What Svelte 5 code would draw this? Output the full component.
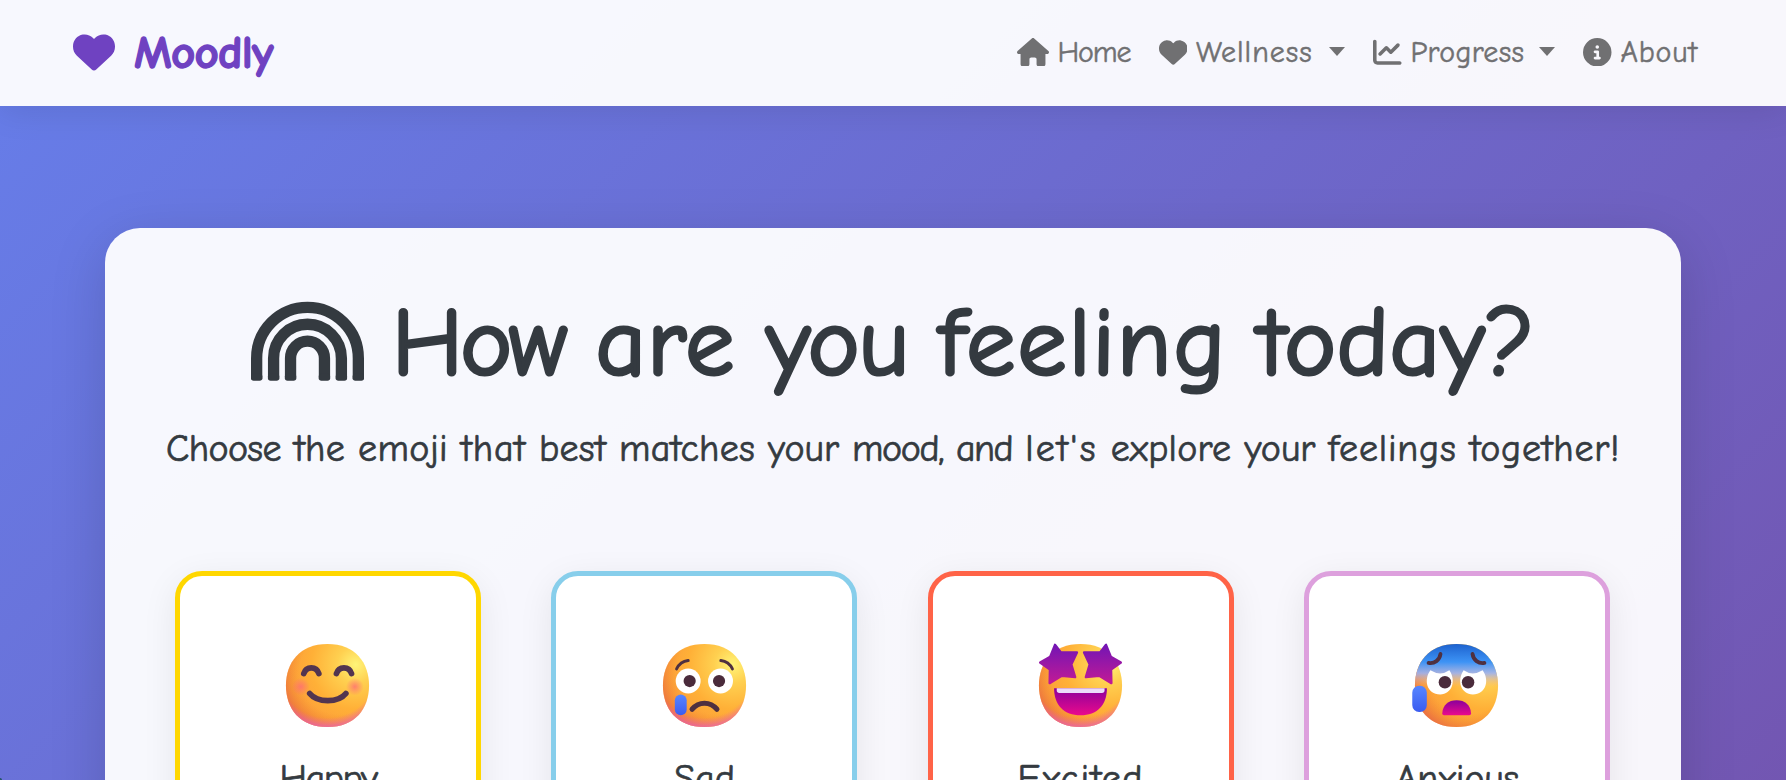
<script>
  const heart = 'M47.6 300.4L228.3 469.1c7.5 7 17.4 10.9 27.7 10.9s20.2-3.9 27.7-10.9L464.4 300.4c30.4-28.3 47.6-68 47.6-109.5v-5.8c0-69.9-50.5-129.5-119.4-141C347 36.5 300.6 51.4 268 84L256 96 244 84c-32.6-32.6-79-47.5-124.6-39.9C50.5 55.6 0 115.2 0 185.1v5.8c0 41.5 17.2 81.2 47.6 109.5z';
  const house = 'M575.8 255.5c0 18-15 32.1-32 32.1h-32l.7 160.2c0 2.7-.2 5.4-.5 8.1V472c0 22.1-17.9 40-40 40H456c-1.1 0-2.2 0-3.3-.1c-1.4 .1-2.8 .1-4.2 .1H416 392c-22.1 0-40-17.9-40-40V448 384c0-17.7-14.3-32-32-32H256c-17.7 0-32 14.3-32 32v64 24c0 22.1-17.9 40-40 40H160 128.1c-1.5 0-3-.1-4.5-.2c-1.2 .1-2.4 .2-3.6 .2H104c-22.1 0-40-17.9-40-40V360c0-.9 0-1.9 .1-2.8V287.6H32c-18 0-32-14-32-32.1c0-9 3-17 10-24L266.4 8c7-7 15-8 22-8s15 2 21 7L564.8 231.5c8 7 12 15 11 24z';
  const chart = 'M64 64c0-17.7-14.3-32-32-32S0 46.3 0 64V400c0 44.2 35.8 80 80 80H480c17.7 0 32-14.3 32-32s-14.3-32-32-32H80c-8.8 0-16-7.2-16-16V64zm406.6 86.6c12.5-12.5 12.5-32.8 0-45.3s-32.8-12.5-45.3 0L320 210.7l-57.4-57.4c-12.5-12.5-32.8-12.5-45.3 0l-112 112c-12.5 12.5-12.5 32.8 0 45.3s32.8 12.5 45.3 0L240 221.3l57.4 57.4c12.5 12.5 32.8 12.5 45.3 0l128-128z';
  const info = 'M256 512A256 256 0 1 0 256 0a256 256 0 1 0 0 512zM216 336h24V272H216c-13.3 0-24-10.7-24-24s10.7-24 24-24h48c13.3 0 24 10.7 24 24v88h8c13.3 0 24 10.7 24 24s-10.7 24-24 24H216c-13.3 0-24-10.7-24-24s10.7-24 24-24zm40-208a32 32 0 1 1 0 64 32 32 0 1 1 0-64z';
  const face = 'M16 30C25.33 30 30 23.73 30 16C30 8.27 25.33 2 16 2C6.66 2 2 8.27 2 16C2 23.73 6.66 30 16 30Z';
  const star = 'M7.4 2.3L9.4 4.9L14.8 4.9L12.9 8.9L14.2 13.2L9.7 12.7L5.6 15.2L5.7 10.6L2.4 8.3L5.8 6.3Z';

  const links = [
    { label: 'Home', icon: house, box: 576, iconWidth: 32, width: 73, spacing: -1.1 },
    { label: 'Wellness', icon: heart, box: 512, iconWidth: 28.5, width: 116, spacing: 1, menu: true },
    { label: 'Progress', icon: chart, box: 512, iconWidth: 28.5, width: 111.5, spacing: 0.3, menu: true },
    { label: 'About', icon: info, box: 512, iconWidth: 28.5, width: 79.5, spacing: 0.8 },
  ];
  const title = [
    { word: 'How', spacing: -2.6 },
    { word: 'are', spacing: 1.1 },
    { word: 'you', spacing: -0.9 },
    { word: 'feeling', spacing: 2.2 },
    { word: 'today?', spacing: 0.7 },
  ];
  const subtitle = [
    { word: 'Choose', spacing: -0.55 },
    { word: 'the', spacing: 0.25 },
    { word: 'emoji', spacing: 0.45 },
    { word: 'that', spacing: 0.8 },
    { word: 'best', spacing: 0.25 },
    { word: 'matches', spacing: 0.25 },
    { word: 'your', spacing: 0 },
    { word: 'mood,', spacing: -1.4 },
    { word: 'and', spacing: -1.5 },
    { word: "let's", spacing: 2.2 },
    { word: 'explore', spacing: 0.25 },
    { word: 'your', spacing: 0 },
    { word: 'feelings', spacing: 0.8 },
    { word: 'together!', spacing: 0.75 },
  ];
  const moods = [
    { label: 'Happy', color: '#ffd700', spacing: -1.4 },
    { label: 'Sad', color: '#87ceeb', spacing: 0.2 },
    { label: 'Excited', color: '#ff6347', spacing: 1.5 },
    { label: 'Anxious', color: '#dda0dd', spacing: -0.2 },
  ];
</script>

{#snippet words(list)}
  {#each list as t, i}<span style="letter-spacing:{t.spacing}px">{t.word}</span>{i < list.length - 1 ? ' ' : ''}{/each}
{/snippet}

<svg class="defs" aria-hidden="true">
  <defs>
    <radialGradient id="base" cx="25.5" cy="9" r="25" gradientUnits="userSpaceOnUse">
      <stop offset="0" stop-color="#fff478" /><stop offset=".25" stop-color="#ffd050" /><stop offset=".6" stop-color="#ffb037" /><stop offset="1" stop-color="#fb9a3c" />
    </radialGradient>
    <radialGradient id="warm" cx="20" cy="12" r="21" gradientUnits="userSpaceOnUse">
      <stop offset=".65" stop-color="#f08423" stop-opacity="0" /><stop offset="1" stop-color="#e0554b" stop-opacity=".75" />
    </radialGradient>
    <radialGradient id="pink" cx="16" cy="10" r="21" gradientUnits="userSpaceOnUse">
      <stop offset=".8" stop-color="#f15db1" stop-opacity="0" /><stop offset="1" stop-color="#e45fd0" stop-opacity=".85" />
    </radialGradient>
    <radialGradient id="cheek">
      <stop offset="0" stop-color="#ff6d75" stop-opacity=".8" /><stop offset="1" stop-color="#ff6d75" stop-opacity="0" />
    </radialGradient>
    <linearGradient id="starfill" x1="0" y1="0" x2="0" y2="1">
      <stop offset="0" stop-color="#7315b4" /><stop offset="1" stop-color="#c11a96" />
    </linearGradient>
    <linearGradient id="mouth" x1="0" y1="0" x2="0" y2="1">
      <stop offset="0" stop-color="#8b009c" /><stop offset="1" stop-color="#ea0a8c" />
    </linearGradient>
    <linearGradient id="tear" x1="0" y1="0" x2="0" y2="1">
      <stop offset="0" stop-color="#5786ff" /><stop offset="1" stop-color="#3b5cf0" />
    </linearGradient>
    <linearGradient id="cold" x1="0" y1="2" x2="0" y2="16.5" gradientUnits="userSpaceOnUse">
      <stop offset="0" stop-color="#1d62cf" /><stop offset=".42" stop-color="#3d93f5" /><stop offset=".68" stop-color="#9bb0f2" stop-opacity=".9" /><stop offset="1" stop-color="#f8b09c" stop-opacity="0" />
    </linearGradient>
  </defs>
</svg>

<div class="page">
  <nav>
    <div class="brand">
      <svg viewBox="0 0 512 512" width="42" height="42"><path d={heart} /></svg>
      <span>Moodly</span>
    </div>
    <ul>
      {#each links as l}
        <li>
          <svg viewBox="0 0 {l.box} 512" width={l.iconWidth} height="28.5"><path d={l.icon} /></svg>
          <span style="width:{l.width}px;letter-spacing:{l.spacing}px">{l.label}</span>
          {#if l.menu}<i class="caret"></i>{/if}
        </li>
      {/each}
    </ul>
  </nav>

  <main>
    <h1>
      <svg viewBox="0 0 640 512" width="113" height="90.4">
        <g fill="none" stroke="currentColor" stroke-width="64">
          <path d="M32 472V352a288 288 0 0 1 576 0V472" />
          <path d="M128 472V352a192 192 0 0 1 384 0V472" />
          <path d="M224 472V352a96 96 0 0 1 192 0V472" />
        </g>
        <g fill="currentColor">
          {#each [0, 96, 192, 384, 480, 576] as x}
            <rect {x} y="440" width="64" height="40" rx="15" />
          {/each}
        </g>
      </svg>
      <span class="title">{@render words(title)}</span>
    </h1>
    <p>{@render words(subtitle)}</p>

    <div class="cards">
      {#each moods as m}
        <section style="border-color:{m.color}">
          <svg class="emoji" viewBox="0 0 32 32">
            <path d={face} fill="url(#base)" />
            {#if m.label !== 'Anxious'}
              <path d={face} fill="url(#warm)" /><path d={face} fill="url(#pink)" />
            {:else}
              <path d={face} fill="url(#warm)" /><path d={face} fill="url(#cold)" />
            {/if}
            {#if m.label === 'Happy'}
              <circle cx="7" cy="16.4" r="3" fill="url(#cheek)" /><circle cx="25.2" cy="16.4" r="3" fill="url(#cheek)" />
              <g fill="none" stroke="#523550" stroke-width="1.9" stroke-linecap="round">
                <path d="M8 12c.8-2.6 4.3-2.6 5.1 0M19 12c.8-2.6 4.3-2.6 5.1 0M10 18.7c2.6 3.2 9.6 3.2 12.2 0" />
              </g>
            {:else if m.label === 'Sad'}
              <circle cx="10.5" cy="14.5" r="4.2" fill="#fff" /><circle cx="21.4" cy="14.5" r="4.2" fill="#fff" />
              <circle cx="11" cy="14.5" r="2.05" fill="#4a2b3b" /><circle cx="20.9" cy="14.5" r="2.05" fill="#4a2b3b" />
              <g fill="none" stroke="#4f3040" stroke-linecap="round">
                <path stroke-width="1" d="M6.6 10.4c.8-1.6 2.2-2.6 3.9-2.8M25.4 10.4c-.8-1.6-2.2-2.6-3.9-2.8" />
                <path stroke-width="1.7" d="M11.8 24c2.3-2.7 6.1-2.7 8.4 0" />
              </g>
              <rect x="6" y="19" width="4" height="7" rx="2" fill="url(#tear)" />
            {:else if m.label === 'Excited'}
              <path d={star} fill="url(#starfill)" stroke="url(#starfill)" stroke-width=".8" stroke-linejoin="round" />
              <path d={star} transform="matrix(-1 0 0 1 32 0)" fill="url(#starfill)" stroke="url(#starfill)" stroke-width=".8" stroke-linejoin="round" />
              <path d="M7.1 16.9H24.9C24.9 22.6 21.6 26 16 26S7.1 22.6 7.1 16.9Z" fill="url(#mouth)" />
              <path d="M8 16.9H24.1V17.6Q24.1 18.5 23.2 18.5H8.9Q8 18.5 8 17.6Z" fill="#ebdcfa" />
            {:else}
              <path d="M7.2 10.9Q10.6 13 13.6 10.9C16 14.5 14.5 19 10.5 19C6 19 4.8 14.2 7.2 10.9ZM24.8 10.9Q21.4 13 18.4 10.9C16 14.5 17.5 19 21.5 19C26 19 27.2 14.2 24.8 10.9Z" fill="#fff" />
              <circle cx="12.1" cy="14.9" r="2.1" fill="#4a2b3b" /><circle cx="19.9" cy="14.9" r="2.1" fill="#4a2b3b" />
              <path d="M6.6 8.4c2 .3 3.7-.9 4-3M25.4 8.4c-2 .3-3.7-.9-4-3" fill="none" stroke="#4f3040" stroke-width="1.3" stroke-linecap="round" />
              <path d="M11.2 25.4C11.4 22.6 13.2 21 16.05 21S20.7 22.6 20.9 25.4Q20.9 26 20.3 26H11.8Q11.2 26 11.2 25.4Z" fill="url(#mouth)" />
              <rect x="1.1" y="16.1" width="4.9" height="8.8" rx="2.3" fill="url(#tear)" />
            {/if}
          </svg>
          <h2 style="letter-spacing:{m.spacing}px">{m.label}</h2>
        </section>
      {/each}
    </div>
  </main>
</div>

<style>
  :global(body) { background: #6c6fd6; overflow: hidden; }
  .defs { position: absolute; width: 0; height: 0; }
  .page {
    height: 780px;
    overflow: hidden;
    color: #343a40;
    font-family: 'Comic Neue', 'Comic Sans MS', Lato, sans-serif;
    background:
      radial-gradient(circle at 0 100%, #26566e 1.5px, transparent 2.5px),
      linear-gradient(135deg, #667eea, #764ba2) 0 0 / 100% 1500px no-repeat;
  }
  svg { display: block; flex: none; }
  nav {
    box-sizing: border-box;
    height: 106px;
    padding: 0 86px 2px 73px;
    display: flex;
    align-items: center;
    justify-content: space-between;
    background: rgba(255, 255, 255, .95);
    box-shadow: 0 4px 35px rgba(0, 0, 0, .1);
  }
  .brand {
    display: flex;
    align-items: center;
    gap: 19px;
    color: #6f42c1;
    fill: currentColor;
    font-size: 47px;
    letter-spacing: -.8px;
    font-weight: 700;
    -webkit-text-stroke: 1.3px currentColor;
  }
  .brand span { padding-top: 2px; }
  ul { display: flex; gap: 28px; margin: 0; padding: 0; list-style: none; }
  li {
    display: flex;
    align-items: center;
    color: #707072;
    fill: currentColor;
    font-size: 30px;
    -webkit-text-stroke: .5px currentColor;
  }
  li span { margin-left: 9px; white-space: nowrap; }
  .caret {
    margin: 0 0 2px 17px;
    border: 8px solid transparent;
    border-top: 9px solid currentColor;
    border-bottom: 0;
  }
  main {
    box-sizing: border-box;
    width: 1576px;
    height: 1200px;
    margin: 122px auto 0;
    padding: 61px 70px 0;
    border-radius: 35px;
    background: rgba(255, 255, 255, .95);
    box-shadow: 0 14px 56px rgba(0, 0, 0, .15);
  }
  h1 {
    display: flex;
    justify-content: center;
    align-items: center;
    gap: 28px;
    height: 108px;
    margin: 0;
    font-size: 98px;
    font-weight: 400;
    white-space: nowrap;
    -webkit-text-stroke: 3.2px currentColor;
  }
  h1 svg { margin-bottom: 4px; }
  .title { word-spacing: -2px; }
  p {
    height: 52px;
    margin: 26px -30px 0;
    text-align: center;
    font-size: 38px;
    line-height: 52px;
    letter-spacing: .25px;
    white-space: nowrap;
    -webkit-text-stroke: .7px currentColor;
  }
  .cards { display: grid; grid-template-columns: repeat(4, 306px); column-gap: 70.4px; margin: 96px -35px 0 0; }
  section {
    box-sizing: border-box;
    height: 400px;
    padding-top: 62px;
    display: flex;
    flex-direction: column;
    align-items: center;
    border: 5px solid;
    border-radius: 27px;
    background: #fff;
    box-shadow: 0 9px 35px rgba(0, 0, 0, .08);
  }
  .emoji { width: 95px; height: 95px; margin-right: 0.4px; }
  h2 { margin: 24px 0 0; font-size: 38px; font-weight: 400; -webkit-text-stroke: .7px currentColor; }
</style>
